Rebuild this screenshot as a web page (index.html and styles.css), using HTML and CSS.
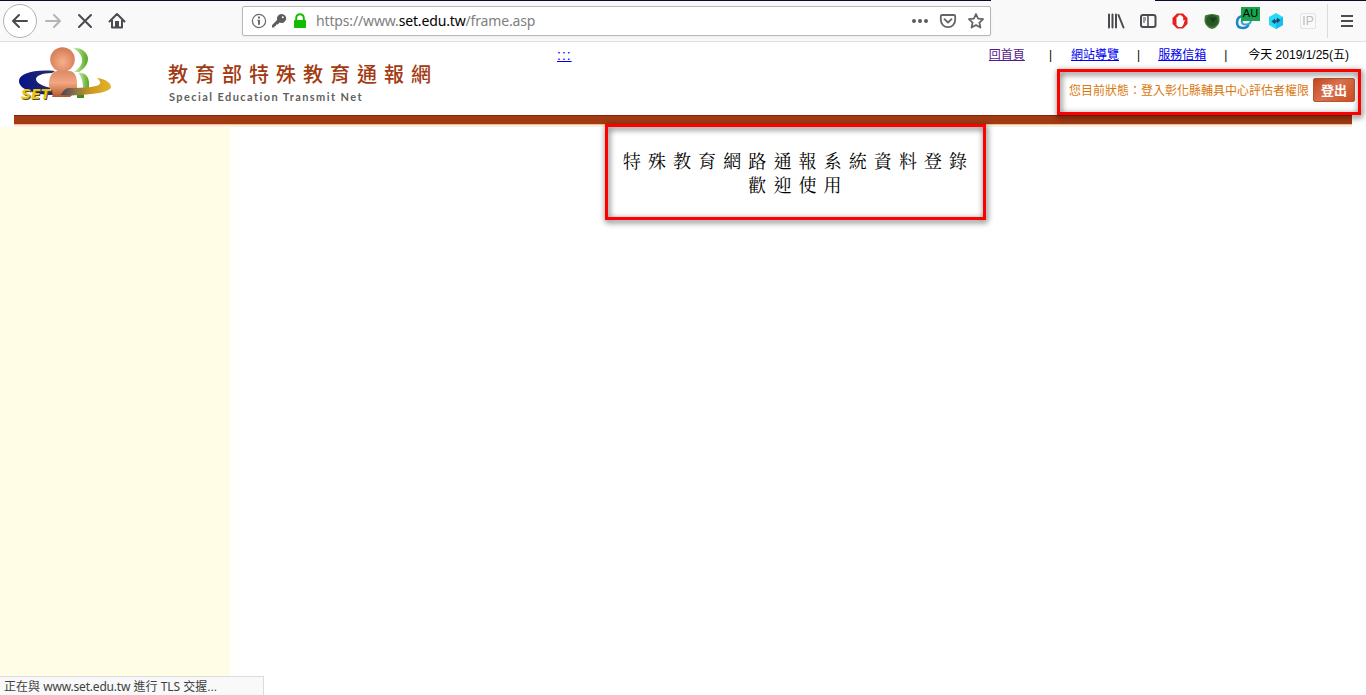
FILE: index.html
```html
<!DOCTYPE html>
<html lang="zh-Hant">
<head>
    <meta charset="UTF-8">
    <title>教育部特殊教育通報網</title>
    <link rel="stylesheet" href="styles.css">
</head>
<body>
    <!-- toolbar -->
    <div class="toolbar">
        <div class="tab-line tab-line-left"></div>
        <div class="tab-line tab-line-right"></div>
        <div class="nav">
            <span class="cell back"><svg width="18" height="18" viewBox="0 0 18 18"><path d="M8 3L2 9l6 6M2.500 9H16" class="line"/></svg></span>
            <span class="cell"><svg width="18" height="18" viewBox="0 0 18 18"><path d="M10 3l6 6-6 6M15.500 9H2" class="line pale"/></svg></span>
            <span class="cell"><svg width="18" height="18" viewBox="0 0 18 18"><path d="M3 3l12 12M15 3L3 15" class="line"/></svg></span>
            <span class="cell"><svg width="18" height="18" viewBox="0 0 18 18"><path d="M1.500 9.500L9 2l7.500 7.500M4 8v7.500h10V8" class="line"/><path d="M7 9h4v6H7z" fill="#4a4a4f"/></svg></span>
        </div>
        <div class="urlbar">
            <svg class="info" width="16" height="16" viewBox="0 0 16 16"><circle cx="8" cy="8" r="6.600" fill="none" stroke="#6b6b6b" stroke-width="1.200"/><path d="M7 3.500h2v2H7zM6.500 6.800H9v5H7V8h-.5z" fill="#6b6b6b"/></svg>
            <svg class="key" width="16" height="16" viewBox="0 0 16 16"><path d="M10.500 1a4.500 4.500 0 0 0-4.300 5.800L1 12.300V14.500h2.500V13h1.500v-1.500h1.500L8.800 9.600A4.500 4.500 0 1 0 10.500 1zm1.300 2.300a1 1 0 1 1 0 2 1 1 0 0 1 0-2z" fill="#5c5c5c"/></svg>
            <svg class="lock" width="14" height="16" viewBox="0 0 14 16"><path d="M3.200 8V5a3.800 3.800 0 0 1 7.600 0v3" fill="none" stroke="#12bc00" stroke-width="2"/><rect x="1" y="7" width="12" height="8" rx="1" fill="#12bc00"/></svg>
            <span class="url">https://www.<b>set.edu.tw</b>/frame.asp</span>
            <svg class="dots" width="18" height="16" viewBox="0 0 18 16"><g fill="#5c5c5c"><circle cx="3" cy="8" r="2"/><circle cx="9" cy="8" r="2"/><circle cx="15" cy="8" r="2"/></g></svg>
            <svg class="pocket" width="18" height="16" viewBox="0 0 18 16"><path d="M3 2h12q1.200 0 1.200 1.200V7a7.200 7.200 0 0 1-14.400 0V3.200Q1.800 2 3 2z" class="line grey"/><path d="M5.500 6.200L9 9.500l3.500-3.300" class="line grey"/></svg>
            <svg class="star" width="18" height="18" viewBox="0 0 18 18"><path d="M9 2l2.100 4.600 5 .6-3.700 3.400 1 4.900L9 13l-4.400 2.500 1-4.900L1.900 7.200l5-.6z" class="line grey"/></svg>
        </div>
        <div class="tools">
            <span class="cell"><svg width="18" height="18" viewBox="0 0 18 18"><path d="M2 2.500v13M5.500 2.500v13M9 2.500v13M11.500 3l5 12.500" class="line"/></svg></span>
            <span class="cell"><svg width="18" height="18" viewBox="0 0 18 18"><rect x="2" y="3" width="14.500" height="12" rx="2" class="line"/><path d="M9 3v12" stroke="#4a4a4f" stroke-width="1.500"/><path d="M4 6h3M4 8h3M4 10h2" stroke="#4a4a4f"/></svg></span>
            <span class="cell"><svg width="18" height="18" viewBox="0 0 18 18"><path d="M6 1.500h6L16.500 6v6L12 16.500H6L1.500 12V6z" fill="#e8201c"/><path d="M5.500 5.500L7 4.500 8 3l2 .2 1.300 1 .9 1V8.500l1.800-.5-2 5.500-1.500 1.500h-3L5.500 13z" fill="#fff"/></svg></span>
            <span class="cell"><svg width="18" height="18" viewBox="0 0 18 18"><path d="M2 3.500Q9 .5 16 3.500q1.500 6-1 9.500-2 3-6 4-4-1-6-4Q.5 9.500 2 3.500z" fill="#3d7a35"/><circle cx="9" cy="8.700" r="6" fill="#2b5728"/><path d="M6 7q3-3 5-1l3-1-2 3q-1 3-4 2 2-1 1-2z" fill="#1c3f1b"/></svg></span>
            <span class="cell badge-cell"><svg width="18" height="18" viewBox="0 0 18 18"><path d="M9 4Q2 4 2 10.500 2 16 8 16q4 0 5.500-3" fill="none" stroke="#1a86c2" stroke-width="2.500"/><path d="M9 7q-3 1.500-2 4 1 2 4 1.500 5 0 5-5" fill="none" stroke="#2fa5cf" stroke-width="2"/></svg><i class="badge">AU</i></span>
            <span class="cell"><svg width="18" height="18" viewBox="0 0 18 18"><path d="M9 1l7 4v8l-7 4-7-4V5z" fill="#25d9fb"/><path d="M9 9l7-4v8l-7 4z" fill="#16bdf2"/><path d="M4.500 9.500L8 6.500v1.700h1.300v2.500H8v1.500zM13.500 8.300L10 11.300V9.500H9.300V7.200H10V5.500z" fill="#234a60"/></svg></span>
            <span class="cell"><i class="ip">IP</i></span>
            <span class="separator"></span>
            <span class="cell"><svg width="18" height="18" viewBox="0 0 18 18"><path d="M3 4h12M3 9h12M3 14h12" class="line flat"/></svg></span>
        </div>
    </div>

    <!-- header -->
    <div class="header">
        <svg class="logo" width="96" height="56" viewBox="0 0 96 56">
            <defs>
                <radialGradient id="skin" cx=".5" cy=".6" r=".6"><stop offset="0" stop-color="#f7b08b"/><stop offset="1" stop-color="#d27a54"/></radialGradient>
                <linearGradient id="body" x2="0" y2="1"><stop offset="0" stop-color="#d98b68"/><stop offset=".45" stop-color="#f3a780"/><stop offset="1" stop-color="#b5572c"/></linearGradient>
                <linearGradient id="green" x2="1" y2="0"><stop offset="0" stop-color="#c9efb2"/><stop offset="1" stop-color="#56a51d"/></linearGradient>
                <linearGradient id="ring" gradientUnits="userSpaceOnUse" x1="1" x2="93" y1="0" y2="0"><stop offset="0" stop-color="#05128b"/><stop offset=".4" stop-color="#2c3160"/><stop offset=".62" stop-color="#8f7645"/><stop offset=".8" stop-color="#cf9c1c"/><stop offset="1" stop-color="#e4b32d"/></linearGradient>
            </defs>
            <path d="M55 2c6-1 14 3 15 10 0 6-3 10-9 14h-5c11-7 11-17-1-24z" fill="url(#green)"/>
            <path d="M60 27c6-1 11 3 11 10v5H65c0-6-1-11-5-15z" fill="url(#green)"/>
            <path d="M59 46h7v6h-7z" fill="#3f8c1a"/>
            <path d="M37 25C15 23 1 28 1 35c0 8 13 12 29 14h12v-6C28 42 18 38 18 33c0-3 6-6 16-6z" fill="url(#ring)"/>
            <path d="M34 51c3-4-3-7-3-12 0-9 3-13 8-14h12c6 0 8 6 8 12v8l-7 6z" fill="url(#body)"/>
            <path d="M42 49c3-1 2-5 8-7 18 0 29-1 32-4 1-2-1-4-3-6 9 1 14 5 14 9 0 3-8 6-20 7-9 1-21 2-31 1z" fill="url(#ring)"/>
            <circle cx="44.500" cy="13.500" r="12.300" fill="url(#skin)"/>
            <text x="4" y="54" class="logo-shadow">SET</text>
            <text x="3" y="53" class="logo-text">SET</text>
        </svg>
        <div class="site-name">
            <h1>教育部特殊教育通報網</h1>
            <p>Special Education Transmit Net</p>
        </div>
        <a href="#" class="guide">:::</a>
        <div class="user-area">
            <div class="links">
                <a href="#" class="visited">回首頁</a>
                <span class="first-bar">|</span>
                <a href="#">網站導覽</a>
                <span>|</span>
                <a href="#">服務信箱</a>
                <span>|</span>
                <span class="today">今天 2019/1/25(五)</span>
            </div>
            <div class="status">
                <span>您目前狀態：登入彰化縣輔具中心評估者權限</span>
                <button>登出</button>
            </div>
        </div>
        <div class="mark mark-status"></div>
    </div>
    <div class="bar"></div>

    <div class="main">
        <div class="sidebar"></div>
        <div class="content">
            <p>特殊教育網路通報系統資料登錄</p>
            <p>歡迎使用</p>
        </div>
        <div class="mark mark-welcome"></div>
    </div>
    <div class="loading">正在與 <span>www.set.edu.tw</span> 進行 <span>TLS</span> 交握...</div>
</body>
</html>
```
FILE: styles.css
```css
* {
    box-sizing: border-box;
}
body {
    margin: 0;
    height: 695px;
    position: relative;
    display: flex;
    flex-direction: column;
    overflow: hidden;
    background: #fff;
    font-family: "Liberation Sans", "Noto Sans CJK TC", sans-serif;
    font-size: 12px;
}
h1, p {
    margin: 0;
}

/* toolbar */
.toolbar {
    height: 42px;
    flex: none;
    position: relative;
    display: flex;
    align-items: center;
    padding: 0 3px 0 4px;
    background: #f9f9fa;
    border-bottom: 1px solid #e0e0e1;
}
.tab-line {
    position: absolute;
    top: 0;
    height: 1px;
    background: #0c0c26;
}
.tab-line-left {
    left: 0;
    width: 991px;
}
.tab-line-right {
    right: 0;
    width: 211px;
}
.nav, .tools {
    display: flex;
    align-items: center;
}
.cell {
    width: 32px;
    height: 32px;
    display: flex;
    align-items: center;
    justify-content: center;
}
.back {
    width: 34px;
    height: 34px;
    margin-left: -1px;
    border: 1px solid #b1b1b3;
    border-radius: 50%;
    background: #fff;
}
.line {
    fill: none;
    stroke: #4a4a4f;
    stroke-width: 2;
    stroke-linecap: round;
    stroke-linejoin: round;
}
.pale {
    stroke: #b5b5b7;
}
.grey {
    stroke: #656565;
    stroke-width: 1.8;
}
.flat {
    stroke-linecap: butt;
}
.urlbar {
    width: 749px;
    height: 30px;
    margin-left: 109px;
    display: flex;
    align-items: center;
    padding: 0 5px 0 8px;
    background: #fff;
    border: 1px solid #b8b8b8;
    border-radius: 2px;
    box-shadow: 0 1px 3px rgba(0, 0, 0, .06);
}
.key {
    margin-left: 4px;
}
.lock {
    margin-left: 6px;
}
.url {
    flex: 1;
    margin-left: 9px;
    font-family: "Noto Sans", sans-serif;
    font-size: 14px;
    letter-spacing: -.15px;
    color: #808080;
}
.url b {
    font-weight: normal;
    color: #000;
}
.pocket, .star {
    margin-left: 10px;
}
.tools {
    margin-left: auto;
}
.badge-cell {
    position: relative;
}
.badge {
    position: absolute;
    left: 13px;
    top: 2px;
    width: 19px;
    height: 14px;
    background: #16a34b;
    color: #000;
    font: 11px/13px "Liberation Sans", sans-serif;
    text-align: center;
}
.ip {
    width: 16px;
    height: 16px;
    border: 1px solid #e4e4e4;
    border-radius: 2px;
    color: #bcbcbc;
    font: 12px/14px "Liberation Sans", sans-serif;
    text-align: center;
}
.separator {
    width: 1px;
    height: 34px;
    margin: 0 3px;
    background: #dcdcdd;
}

/* header */
.header {
    height: 73px;
    flex: none;
    position: relative;
    display: flex;
    align-items: flex-start;
    padding-left: 18px;
}
.logo {
    flex: none;
    margin-top: 4px;
}
.logo-text, .logo-shadow {
    font: italic bold 14px "DejaVu Sans", sans-serif;
    fill: #e8c51c;
}
.logo-shadow {
    fill: #594a12;
}
.site-name {
    width: 442px;
    flex: none;
    padding: 17px 0 0 54px;
}
.site-name h1 {
    font: 500 20px/29px "Noto Sans CJK TC", sans-serif;
    letter-spacing: 7px;
    color: #a23a12;
    white-space: nowrap;
}
.site-name p {
    margin: 1px 0 0 1px;
    font: bold 11px/15px Lato, sans-serif;
    letter-spacing: 1.42px;
    color: #5f5f5f;
    white-space: nowrap;
}
.guide {
    width: 14px;
    margin: 4px 0 0 1px;
    font-size: 14px;
    line-height: 18px;
    letter-spacing: 1px;
}
a {
    color: #00e;
}
.user-area {
    margin-left: auto;
    display: flex;
    flex-direction: column;
    align-items: flex-end;
}
.links {
    height: 26px;
    display: flex;
    align-items: center;
    padding-right: 17px;
    line-height: 18px;
}
.links span {
    margin: 0 18px;
}
.links .first-bar {
    margin: 0 19px 0 24px;
}
.links .today {
    margin: 0 0 0 3px;
}
.links .visited {
    color: #551a8b;
}
.status {
    display: flex;
    align-items: center;
    height: 46px;
    padding: 0 11px 4px 0;
    color: #d9780f;
}
.status button {
    width: 42px;
    height: 24px;
    margin: 2px 0 0 4px;
    padding: 0;
    border: 1px solid #b9552c;
    border-radius: 2px;
    background: linear-gradient(135deg, #c54723, #d9714f 45%, #c95021);
    color: #fff;
    font: bold 13px/20px "Noto Sans CJK TC", sans-serif;
}
.bar {
    height: 12px;
    flex: none;
    margin: 0 14px;
    background: linear-gradient(#84200d 0 1px, #a23a12 1px 9px, #edc08e 9px 10px, #faeee4 10px);
}

/* red frames */
.mark {
    position: absolute;
    z-index: 2;
    border: 3px solid #f00;
    filter: drop-shadow(1px 2px 3px rgba(0, 0, 0, .75));
}
.mark-status {
    left: 1057px;
    top: 27px;
    width: 304px;
    height: 46px;
}
.mark-welcome {
    left: 605px;
    top: -3px;
    width: 381px;
    height: 96px;
}

.main {
    flex: 1;
    position: relative;
    display: flex;
}
.sidebar {
    width: 230px;
    background: #fffde6;
}
.content {
    flex: 1;
    padding: 23px 0 0 1px;
    font: 18px/24px "Liberation Serif", "Noto Serif CJK TC", "Noto Sans CJK TC", serif;
    letter-spacing: 7.1px;
    text-align: center;
    color: #000;
}
.loading {
    position: absolute;
    left: 0;
    bottom: 0;
    width: 264px;
    height: 19px;
    padding-left: 4px;
    border: 1px solid #dcdcdc;
    border-width: 1px 1px 0 0;
    background: #f9f9fa;
    color: #404040;
    line-height: 19px;
    white-space: nowrap;
}
.loading span {
    font-family: "Noto Sans", sans-serif;
    letter-spacing: -.2px;
}
```
